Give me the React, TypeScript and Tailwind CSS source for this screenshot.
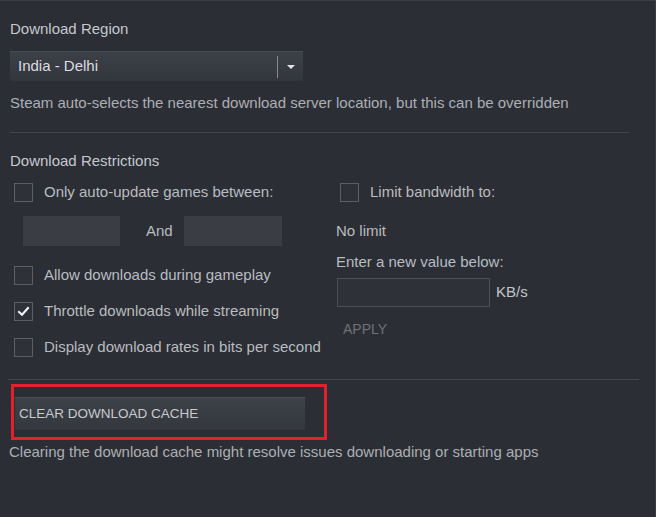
import React from "react";

const Checkbox = ({ checked = false }: { checked?: boolean }) => (
  <span className="flex h-[19px] w-[19px] shrink-0 items-center justify-center border border-[#5b5e64] bg-[#2e3137]">
    {checked && (
      <svg viewBox="0 0 16 16" className="h-[13px] w-[13px]">
        <path d="M2.5 8.5 L6.2 12 L13.5 3.8" fill="none" stroke="#f2f2f2" strokeWidth="2.6" strokeLinecap="square" />
      </svg>
    )}
  </span>
);

const CheckRow = ({ label, checked }: { label: string; checked?: boolean }) => (
  <div className="flex h-[19px] items-center gap-[11px] pl-[4px]">
    <Checkbox checked={checked} />
    <span className="whitespace-nowrap text-[15px] text-[#b9bcc0]">{label}</span>
  </div>
);

export default function App() {
  return (
    <div
      className="h-[517px] w-[656px] overflow-hidden border-t border-r border-[#3a3d42] bg-[#2b2e34] text-[#c3c5c9]"
      style={{ fontFamily: '"Liberation Sans", Arial, sans-serif' }}
    >
      <div className="px-[10px]">
        {/* Download Region */}
        <div className="pt-[19px] text-[15px] leading-[18px] text-[#c6c8cc]">Download Region</div>
        <div className="mt-[13px] flex h-[30px] w-[293px] items-center border-t border-[#464a51] bg-gradient-to-b from-[#3c4048] to-[#33363d] pl-[8px]">
          <span className="flex-1 text-[15px] text-[#dcdee1]">India - Delhi</span>
          <span className="h-[22px] w-px bg-[#868990]" />
          <span className="flex w-[25px] justify-center">
            <svg viewBox="0 0 8 4" className="h-[4px] w-[8px]">
              <path d="M0 0 H8 L4 4 Z" fill="#e4e5e7" />
            </svg>
          </span>
        </div>
        <div className="mt-[13px] text-[15px] leading-[18px] text-[#acafb4]">
          Steam auto-selects the nearest download server location, but this can be overridden
        </div>
        <div className="mt-[20px] mr-[16px] h-px bg-[#41454b]" />

        {/* Download Restrictions */}
        <div className="mt-[19px] text-[15px] leading-[18px] text-[#c6c8cc]">Download Restrictions</div>
        <div className="mt-[13px] flex">
          <div className="flex w-[316px] flex-col">
            <CheckRow label="Only auto-update games between:" />
            <div className="mt-[14px] flex items-center pl-[13px]">
              <div className="h-[30px] w-[97px] bg-[#3a3d44]" />
              <span className="w-[64px] pl-[26px] text-[15px] text-[#b9bcc0]">And</span>
              <div className="h-[30px] w-[98px] bg-[#3a3d44]" />
            </div>
            <div className="mt-[20px] flex flex-col gap-[17px]">
              <CheckRow label="Allow downloads during gameplay" />
              <CheckRow label="Throttle downloads while streaming" checked />
              <CheckRow label="Display download rates in bits per second" />
            </div>
          </div>
          <div className="flex flex-col pl-[14px]">
            <div className="flex h-[19px] items-center gap-[11px]">
              <Checkbox />
              <span className="text-[15px] text-[#b9bcc0]">Limit bandwidth to:</span>
            </div>
            <div className="-ml-[4px] mt-[20px] text-[15px] leading-[18px] text-[#b9bcc0]">No limit</div>
            <div className="-ml-[4px] mt-[13px] text-[15px] leading-[18px] text-[#b9bcc0]">Enter a new value below:</div>
            <div className="-ml-[3px] mt-[7px] flex items-center gap-[6px]">
              <div className="h-[29px] w-[153px] border border-[#4d5056] bg-[#2e3137]" />
              <span className="text-[15px] text-[#c3c5c9]">KB/s</span>
            </div>
            <div className="ml-[3px] mt-[12px] text-[14px] text-[#6f7277]">APPLY</div>
          </div>
        </div>

        <div className="-ml-[2px] mt-[22px] mr-[6px] h-px bg-[#44484e]" />

        {/* Clear cache */}
        <div className="ml-px mt-[4px] w-[316px] border-[3px] border-[#e3202b] pb-[7px] pl-[1px] pt-[10px]">
          <div className="flex h-[33px] w-[290px] items-center border-t border-[#4a4e55] bg-gradient-to-b from-[#3d4148] to-[#34373e] pl-[4px] text-[13.5px] text-[#c8cacd]">
            CLEAR DOWNLOAD CACHE
          </div>
        </div>
        <div className="-ml-px mt-[3px] text-[15px] leading-[18px] text-[#acafb4]">
          Clearing the download cache might resolve issues downloading or starting apps
        </div>
      </div>
    </div>
  );
}
